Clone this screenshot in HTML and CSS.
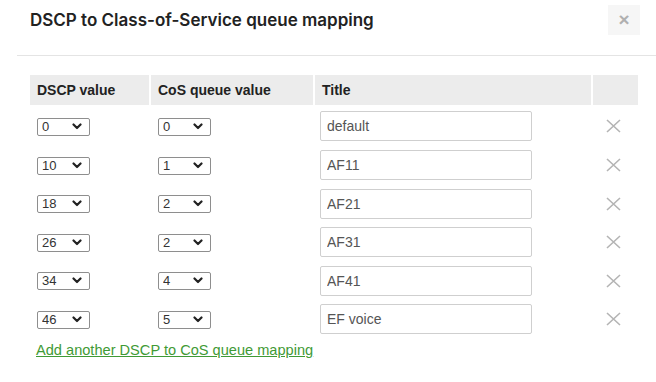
FILE: index.html
```html
<!DOCTYPE html>
<html lang="en">
<head>
    <meta charset="UTF-8">
    <title>DSCP to Class-of-Service queue mapping</title>
    <link rel="stylesheet" href="styles.css">
</head>
<body>

<div class="modal">

    <!-- Header -->
    <div class="modal-head">
        <h2 class="modal-title">DSCP to Class-of-Service queue mapping</h2>
        <button class="close-btn" type="button">&times;</button>
    </div>

    <!-- Mapping table -->
    <div class="modal-body">
        <div class="map-table">
            <div class="th">DSCP value</div>
            <div class="th">CoS queue value</div>
            <div class="th">Title</div>
            <div class="th"></div>
        </div>
        <div id="rows"></div>

        <a class="add-link" href="#">Add another DSCP to CoS queue mapping</a>
    </div>

</div>

<script>
const mappings = [
    ["0", "0", "default"],
    ["10", "1", "AF11"],
    ["18", "2", "AF21"],
    ["26", "2", "AF31"],
    ["34", "4", "AF41"],
    ["46", "5", "EF voice"]
];

const chevron = '<svg class="chev" width="10" height="7" viewBox="0 0 10 7"><path d="M1.5 1.5 L5 5 L8.5 1.5" fill="none" stroke="#222" stroke-width="2.2" stroke-linecap="round" stroke-linejoin="round"/></svg>';
const cross = '<svg width="15" height="14" viewBox="0 0 15 14"><path d="M1 1 L14 13 M14 1 L1 13" stroke="#b4b4b4" stroke-width="1.6"/></svg>';

function selectBox(val) {
    return '<span class="select"><select><option>' + val + '</option></select>' + chevron + '</span>';
}

let rows = document.getElementById("rows");
mappings.forEach(function (m) {
    let row = document.createElement("div");
    row.className = "map-table map-row";
    row.innerHTML =
        '<div class="td">' + selectBox(m[0]) + '</div>' +
        '<div class="td">' + selectBox(m[1]) + '</div>' +
        '<div class="td"><input class="title-input" type="text" value="' + m[2] + '"></div>' +
        '<div class="td del">' + cross + '</div>';
    rows.appendChild(row);
});
</script>

</body>
</html>
```

FILE: styles.css
```css
body {
    margin: 0;
    background-color: #fff;
    font-family: "Liberation Sans", Arial, sans-serif;
    color: #222;
}

.modal {
    padding-left: 17px;
}

.modal-head {
    display: flex;
    justify-content: space-between;
    align-items: flex-start;
    height: 56px;
    box-sizing: border-box;
    border-bottom: 1px solid #e4e4e4;
    padding: 5px 16px 0 13px;
}

.modal-title {
    margin: 4px 0 0;
    font-family: Inter, sans-serif;
    font-weight: 600;
    font-size: 17px;
    line-height: 22px;
    color: #222;
}

.close-btn {
    width: 32px;
    height: 30px;
    border: none;
    background-color: #f6f6f6;
    color: #b0b0b0;
    font-size: 19px;
    font-weight: bold;
    line-height: 30px;
    padding: 0;
    font-family: "Liberation Sans", Arial, sans-serif;
}

.modal-body {
    padding: 19px 18px 0 13px;
}

.map-table {
    display: grid;
    grid-template-columns: 119px 162px 276px 45px;
    column-gap: 2px;
}

.th {
    background-color: #ececec;
    height: 30px;
    line-height: 30px;
    padding-left: 7px;
    font-weight: bold;
    font-size: 14px;
    color: #222;
}

#rows {
    padding-top: 2.2px;
}

.map-row {
    height: 38.6px;
    align-items: center;
}

.td {
    padding-left: 7px;
    display: flex;
    align-items: center;
}

.td:nth-child(3) {
    padding-left: 5px;
}

.select {
    position: relative;
    display: inline-block;
}

.select select {
    appearance: none;
    -webkit-appearance: none;
    width: 53px;
    height: 18px;
    box-sizing: border-box;
    border: 1px solid #8e8e8e;
    border-radius: 2px;
    background: #fff;
    padding: 0 0 0 4px;
    font-family: "Liberation Sans", Arial, sans-serif;
    font-size: 13px;
    color: #333;
    line-height: 16px;
}

.select .chev {
    position: absolute;
    right: 8px;
    top: 6px;
}

.title-input {
    width: 212px;
    height: 30px;
    box-sizing: border-box;
    border: 1px solid #cfcfcf;
    border-radius: 2px;
    padding: 0 6px;
    font-family: "Liberation Sans", Arial, sans-serif;
    font-size: 14px;
    color: #555;
}

.del {
    padding-left: 13px;
}

.add-link {
    display: inline-block;
    margin: 2px 0 0 6px;
    font-size: 14.6px;
    line-height: 18px;
    color: #3f9a35;
}
```
